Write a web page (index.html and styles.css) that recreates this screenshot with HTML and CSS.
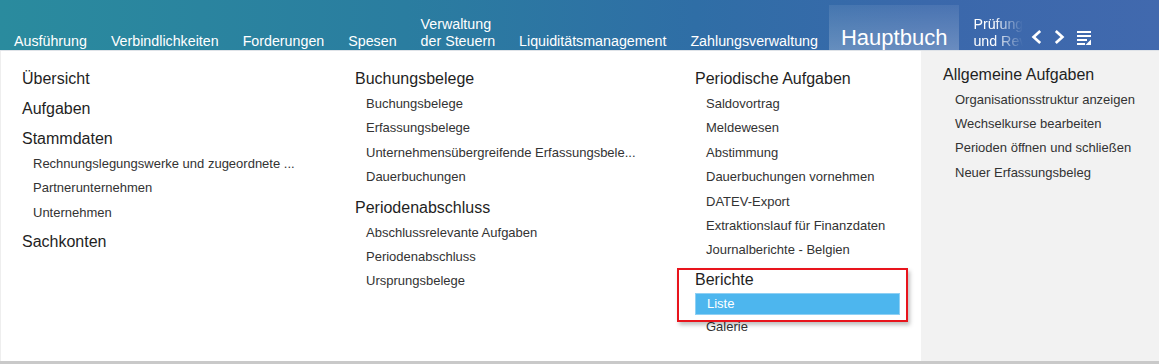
FILE: index.html
```html
<!DOCTYPE html>
<html lang="de">
<head>
    <meta charset="UTF-8">
    <meta name="viewport" content="width=device-width, initial-scale=1.0">
    <title>Hauptbuch</title>
    <link rel="stylesheet" href="styles.css">
</head>
<body>
    <div class="shell">
        <div class="topbar">
            <div class="tab">Ausführung</div>
            <div class="tab">Verbindlichkeiten</div>
            <div class="tab">Forderungen</div>
            <div class="tab">Spesen</div>
            <div class="tab">Verwaltung<br>der Steuern</div>
            <div class="tab">Liquiditätsmanagement</div>
            <div class="tab">Zahlungsverwaltung</div>
            <div class="tab tab-active">Hauptbuch</div>
            <div class="tab tab-clipped">Prüfung<br>und Revision</div>
            <div class="tools">
                <svg width="11" height="14" viewBox="0 0 11 14"><path d="M9.2 1 L2.6 7 L9.2 13" fill="none" stroke="#fff" stroke-width="2.7"/></svg>
                <svg width="11" height="14" viewBox="0 0 11 14"><path d="M1.8 1 L8.4 7 L1.8 13" fill="none" stroke="#fff" stroke-width="2.7"/></svg>
                <svg width="14" height="14" viewBox="0 0 14 14">
                    <rect x="0" y="0" width="14" height="2" fill="#fff"/>
                    <rect x="0" y="4" width="14" height="2" fill="#fff"/>
                    <rect x="0" y="8" width="10" height="2" fill="#fff"/>
                    <rect x="0" y="12" width="8" height="2" fill="#fff"/>
                    <path d="M14 8.5 L14 14 L8.5 14 Z" fill="#fff"/>
                </svg>
            </div>
        </div>

        <div class="menu">
            <div class="col col-1">
                <div class="group">Übersicht</div>
                <div class="group">Aufgaben</div>
                <div class="group">Stammdaten</div>
                <div class="item">Rechnungslegungswerke und zugeordnete ...</div>
                <div class="item">Partnerunternehmen</div>
                <div class="item">Unternehmen</div>
                <div class="group">Sachkonten</div>
            </div>
            <div class="col col-2">
                <div class="group">Buchungsbelege</div>
                <div class="item">Buchungsbelege</div>
                <div class="item">Erfassungsbelege</div>
                <div class="item">Unternehmensübergreifende Erfassungsbele...</div>
                <div class="item">Dauerbuchungen</div>
                <div class="group">Periodenabschluss</div>
                <div class="item">Abschlussrelevante Aufgaben</div>
                <div class="item">Periodenabschluss</div>
                <div class="item">Ursprungsbelege</div>
            </div>
            <div class="col col-3">
                <div class="group">Periodische Aufgaben</div>
                <div class="item">Saldovortrag</div>
                <div class="item">Meldewesen</div>
                <div class="item">Abstimmung</div>
                <div class="item">Dauerbuchungen vornehmen</div>
                <div class="item">DATEV-Export</div>
                <div class="item">Extraktionslauf für Finanzdaten</div>
                <div class="item">Journalberichte - Belgien</div>
                <div class="marked">
                    <div class="group">Berichte</div>
                    <div class="item item-selected">Liste</div>
                    <div class="mark-box"></div>
                </div>
                <div class="item">Galerie</div>
            </div>
            <div class="col col-4">
                <div class="group">Allgemeine Aufgaben</div>
                <div class="item">Organisationsstruktur anzeigen</div>
                <div class="item">Wechselkurse bearbeiten</div>
                <div class="item">Perioden öffnen und schließen</div>
                <div class="item">Neuer Erfassungsbeleg</div>
            </div>
        </div>
        <div class="under"></div>
    </div>
</body>
</html>
```

FILE: styles.css
```css
html, body {
    margin: 0;
    padding: 0;
    height: 364px;
    overflow: hidden;
}
body {
    font-family: "Liberation Sans", Arial, sans-serif;
    background: #fff;
}
.shell {
    display: flex;
    flex-direction: column;
    height: 364px;
}
.topbar {
    display: flex;
    align-items: flex-end;
    height: 50px;
    padding-left: 2px;
    background: linear-gradient(to right, #2a8b9e 0%, #2a7da0 35%, #2f6ea6 60%, #3a68ab 80%, #4169ae 100%);
    border-bottom: 1px solid #dfe3e8;
    color: #fff;
    flex-shrink: 0;
}
.tab {
    padding: 0 12px;
    font-size: 14.25px;
    line-height: 17px;
    white-space: nowrap;
}
.tab-active {
    height: 45px;
    display: flex;
    align-items: flex-end;
    margin-left: -1px;
    font-size: 22px;
    line-height: 24px;
    background: linear-gradient(to bottom, rgba(255,255,255,0.08), rgba(255,255,255,0.24));
}
.tab-clipped {
    width: 50px;
    padding: 0 0 0 14px;
    overflow: hidden;
    -webkit-mask-image: linear-gradient(to right, #000 55%, transparent 100%);
    mask-image: linear-gradient(to right, #000 55%, transparent 100%);
}
.tools {
    display: flex;
    align-items: center;
    gap: 12px;
    margin-left: 8px;
    padding-bottom: 5px;
}
.tools svg {
    display: block;
}
.tools svg:last-child {
    margin-top: 2px;
}
.menu {
    flex: 1;
    display: grid;
    grid-template-columns: 354px 340px 226px 1fr;
    border-left: 1px solid #eee;
}
.col {
    padding-top: 17px;
}
.col-1 {
    padding-left: 21px;
}
.col-4 {
    background: #f2f2f2;
    padding-top: 13px;
    padding-left: 22px;
}
.group {
    font-size: 16px;
    line-height: 22px;
    color: #1f1f1f;
    margin: 7px 0 2px;
}
.col > .group:first-child {
    margin-top: 0;
}
.col-1 .group {
    margin-top: 8px;
}
.col-1 .group:last-child {
    margin-top: 6px;
}
.item {
    font-size: 13px;
    line-height: 24.4px;
    color: #333;
    padding-left: 11px;
    white-space: nowrap;
}
.col-4 .item {
    line-height: 24.2px;
    padding-left: 12px;
}
.marked {
    position: relative;
    margin-top: -1px;
}
.item-selected {
    width: 192px;
    line-height: 20px;
    background: #4db6ee;
    border: 1px solid #8fd0f4;
    color: #fff;
}
.mark-box {
    position: absolute;
    left: -18px;
    top: -1px;
    width: 227px;
    height: 50px;
    border: 2px solid #e8141c;
    box-shadow: 2px 3px 4px rgba(0,0,0,0.25);
}
.under {
    height: 3px;
    background: #c9c9c9;
    flex-shrink: 0;
}
```
